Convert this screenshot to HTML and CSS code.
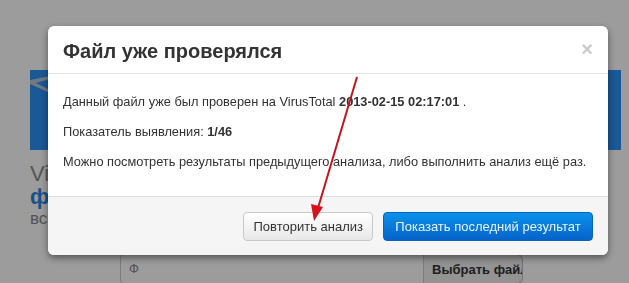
FILE: index.html
```html
<!DOCTYPE html>
<html lang="ru">

<head>
    <meta charset="UTF-8">
    <title>Файл уже проверялся</title>
    <link rel="stylesheet" href="styles.css">
</head>

<body>

    <!-- страница под модальным окном -->
    <div class="page">
        <div class="banner">
            <svg class="banner-mark" width="20" height="30" viewBox="0 0 20 30">
                <polygon points="0,4 20,0 20,3 6,7 20,14 20,17 0,8" fill="#b9c6d4" />
            </svg>
        </div>
        <div class="intro">
            <div class="intro-title">VirusTotal</div>
            <div class="intro-lead">файл</div>
            <div class="intro-text">все</div>
        </div>
        <div class="search">
            <div class="search-input">Ф</div>
            <div class="search-btn">Выбрать файл</div>
        </div>
    </div>

    <div class="backdrop"></div>

    <div class="modal">
        <div class="modal-header">
            <span class="close">&times;</span>
            <h3>Файл уже проверялся</h3>
        </div>
        <div class="modal-body">
            <p>Данный файл уже был проверен на VirusTotal <b>2013-02-15 02:17:01</b> .</p>
            <p>Показатель выявления: <b>1/46</b></p>
            <p>Можно посмотреть результаты предыдущего анализа, либо выполнить анализ ещё раз.</p>
        </div>
        <div class="modal-footer">
            <button class="btn">Повторить анализ</button>
            <button class="btn btn-primary">Показать последний результат</button>
        </div>
    </div>

    <!-- красная стрелка поверх скриншота -->
    <svg class="arrow" width="629" height="283" viewBox="0 0 629 283">
        <line x1="357" y1="77" x2="318" y2="208" stroke="#c4151c" stroke-width="2" />
        <polygon points="314,221 311,204 323,207" fill="#d8121b" />
    </svg>

</body>

</html>
```

FILE: styles.css
```css
html,
body {
    margin: 0;
    padding: 0;
    height: 100%;
    overflow: hidden;
}

body {
    font-family: "Liberation Sans", Arial, sans-serif;
    background: #ffffff;
    color: #333;
}

.page {
    padding: 70px 8px 0 30px;
}

.banner {
    height: 80px;
    background: #2c90f6;
    position: relative;
}

.banner-mark {
    position: absolute;
    left: 0;
    top: 6px;
}

.intro {
    padding-top: 12px;
    width: 90px;
}

.intro-title {
    font-size: 22px;
    color: #8c8c8c;
    line-height: 24px;
    white-space: nowrap;
}

.intro-lead {
    font-size: 22px;
    font-weight: bold;
    color: #2a86e0;
    line-height: 22px;
}

.intro-text {
    font-size: 17px;
    color: #888;
    line-height: 22px;
}

.search {
    display: flex;
    margin: 24px 0 0 90px;
    width: 403px;
    height: 30px;
}

.search-input {
    flex: 1;
    border: 1px solid #ccc;
    border-radius: 4px 0 0 4px;
    background: #fff;
    font-size: 13px;
    color: #888;
    padding: 6px 8px;
}

.search-btn {
    width: 82px;
    border: 1px solid #bbb;
    border-left: none;
    border-radius: 0 6px 6px 0;
    background: #f0f0f0;
    font-size: 13px;
    font-weight: bold;
    padding: 7px 8px;
    white-space: nowrap;
    overflow: hidden;
}

.backdrop {
    position: fixed;
    left: 0;
    top: 0;
    right: 0;
    bottom: 0;
    background: rgba(0, 0, 0, 0.39);
}

.modal {
    position: absolute;
    left: 48px;
    top: 26px;
    width: 560px;
    background: #fff;
    border-radius: 6px;
    box-shadow: 0 3px 7px rgba(0, 0, 0, 0.45);
    overflow: hidden;
}

.modal-header {
    height: 47px;
    padding: 0 15px;
    border-bottom: 1px solid #e5e5e5;
}

.modal-header h3 {
    margin: 0;
    font-size: 20px;
    line-height: 50px;
    font-weight: bold;
    color: #333;
}

.close {
    float: right;
    font-size: 20px;
    font-weight: bold;
    line-height: 46px;
    color: #cacaca;
}

.modal-body {
    padding: 18px 15px 24px;
}

.modal-body p {
    margin: 0 0 10px;
    font-size: 12.8px;
    line-height: 20px;
    white-space: nowrap;
}

.modal-body p:last-child {
    margin-bottom: 0;
}

.modal-footer {
    background: #f5f5f5;
    border-top: 1px solid #ddd;
    padding: 15px 15px 14px;
    display: flex;
    justify-content: flex-end;
    gap: 10px;
}

.btn {
    font-family: "Liberation Sans", Arial, sans-serif;
    font-size: 13px;
    height: 29px;
    padding: 0 9px;
    border-radius: 4px;
    border: 1px solid #c8c8c8;
    background: linear-gradient(#ffffff, #e8e8e8);
    color: #333;
    white-space: nowrap;
}

.btn-primary {
    width: 210px;
    padding: 0;
    border-color: #0a62c0;
    background: linear-gradient(#0b92ea, #0563c9);
    color: #e8f4ff;
}

.arrow {
    position: absolute;
    left: 0;
    top: 0;
}
```
